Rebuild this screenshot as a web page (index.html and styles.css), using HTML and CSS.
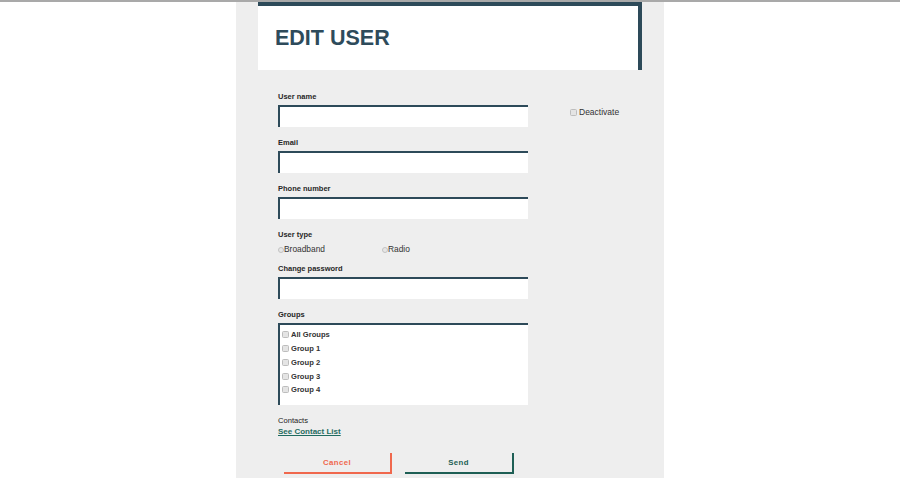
FILE: index.html
```html
<!DOCTYPE html>
<html lang="en">
<head>
<meta charset="utf-8">
<title>Edit User</title>
<link rel="stylesheet" href="styles.css">
</head>
<body>
<div class="panel">
  <div class="header">
    <h1 class="title">EDIT USER</h1>
  </div>
  <form class="form">
    <div class="row">
      <div class="main-col">
        <div class="field">
          <label class="label">User name</label>
          <input class="input" type="text">
        </div>
        <div class="field">
          <label class="label">Email</label>
          <input class="input" type="text">
        </div>
        <div class="field">
          <label class="label">Phone number</label>
          <input class="input" type="text">
        </div>
        <div class="field field-type">
          <label class="label">User type</label>
          <div class="radios">
            <label class="radio"><input type="radio" name="type" class="rb">Broadband</label>
            <label class="radio"><input type="radio" name="type" class="rb">Radio</label>
          </div>
        </div>
        <div class="field">
          <label class="label">Change password</label>
          <input class="input" type="password">
        </div>
        <div class="field">
          <label class="label">Groups</label>
          <div class="groups">
            <label class="group"><input type="checkbox" class="cb">All Groups</label>
            <label class="group"><input type="checkbox" class="cb">Group 1</label>
            <label class="group"><input type="checkbox" class="cb">Group 2</label>
            <label class="group"><input type="checkbox" class="cb">Group 3</label>
            <label class="group"><input type="checkbox" class="cb">Group 4</label>
          </div>
        </div>
        <div class="contacts">
          <div class="contacts-label">Contacts</div>
          <a class="link" href="#">See Contact List</a>
        </div>
      </div>
      <div class="side-col">
        <label class="deactivate"><input type="checkbox" class="cb">Deactivate</label>
      </div>
    </div>
    <div class="buttons">
      <button type="button" class="btn btn-cancel">Cancel</button>
      <button type="button" class="btn btn-send">Send</button>
    </div>
  </form>
</div>
</body>
</html>
```
FILE: styles.css
```css
html, body {
  margin: 0;
  padding: 0;
}
body {
  background: #ffffff;
  border-top: 2px solid #a9a9a9;
  font-family: "Liberation Sans", Arial, sans-serif;
  color: #2b2b2b;
}
.panel {
  width: 428px;
  margin: 0 auto;
  background: #eeeeee;
  min-height: calc(100vh - 2px);
}
.header {
  margin-left: 22px;
  width: 380px;
  height: 64px;
  background: #ffffff;
  border-top: 4px solid #2d4a59;
  border-right: 4px solid #2d4a59;
}
.title {
  margin: 0;
  padding: 21px 0 0 17px;
  font-size: 21.5px;
  line-height: 22px;
  font-weight: bold;
  color: #2e4b5b;
}
.form {
  padding: 22px 0 0 42px;
}
.row {
  display: flex;
}
.main-col {
  width: 250px;
  display: flex;
  flex-direction: column;
}
.side-col {
  margin-left: 42px;
  padding-top: 14px;
}
.field {
  display: flex;
  flex-direction: column;
  margin-bottom: 11px;
}
.field-type {
  margin-bottom: 8px;
}
.label {
  font-size: 7.5px;
  line-height: 10px;
  font-weight: bold;
  color: #262626;
  margin-bottom: 3px;
}
.input {
  box-sizing: border-box;
  width: 250px;
  height: 22px;
  margin: 0;
  padding: 0 4px;
  background: #ffffff;
  border: none;
  border-top: 2px solid #2d4a59;
  border-left: 2px solid #2d4a59;
  outline: none;
}
.radios {
  display: flex;
  height: 13px;
  align-items: center;
}
.radio {
  width: 104px;
  display: flex;
  align-items: center;
  font-size: 8.4px;
  line-height: 13px;
  color: #333333;
}
.rb {
  appearance: none;
  -webkit-appearance: none;
  box-sizing: border-box;
  width: 6px;
  height: 6px;
  margin: 0;
  border: 1px solid #c2c2c2;
  border-radius: 50%;
  background: #e6e6e6;
}
.cb {
  appearance: none;
  -webkit-appearance: none;
  box-sizing: border-box;
  width: 7px;
  height: 7px;
  margin: 0 2px 0 0;
  border: 1px solid #bdbdbd;
  border-radius: 1.5px;
  background: #e4e4e4;
}
.groups {
  box-sizing: border-box;
  width: 250px;
  height: 82px;
  padding: 3px 0 0 2px;
  background: #ffffff;
  border-top: 2px solid #2d4a59;
  border-left: 2px solid #2d4a59;
  display: flex;
  flex-direction: column;
}
.group {
  display: flex;
  align-items: center;
  height: 13.75px;
  font-size: 7.6px;
  font-weight: bold;
  color: #333333;
}
.contacts {
  display: flex;
  flex-direction: column;
}
.contacts-label {
  font-size: 7.6px;
  line-height: 10px;
  color: #222222;
}
.link {
  font-size: 8px;
  line-height: 11px;
  font-weight: bold;
  color: #1f6b60;
  text-decoration: underline;
  width: max-content;
}
.deactivate {
  display: flex;
  align-items: center;
  font-size: 8.5px;
  line-height: 12px;
  color: #333333;
}
.buttons {
  display: flex;
  gap: 13px;
  margin-top: 16px;
  padding-left: 6px;
}
.btn {
  box-sizing: border-box;
  height: 21px;
  margin: 0;
  padding: 0;
  background: transparent;
  border: none;
  font-family: "Liberation Sans", Arial, sans-serif;
  font-size: 7.8px;
  font-weight: bold;
  letter-spacing: 0.4px;
  cursor: pointer;
}
.btn-cancel {
  width: 108px;
  color: #f0684d;
  border-right: 2px solid #f0684d;
  border-bottom: 2px solid #f0684d;
}
.btn-send {
  width: 109px;
  color: #1e5f55;
  border-right: 2px solid #1e5f55;
  border-bottom: 2px solid #1e5f55;
}
```
